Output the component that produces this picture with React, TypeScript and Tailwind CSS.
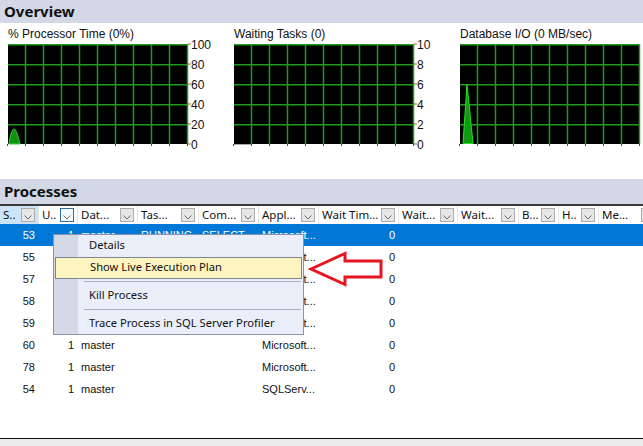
import React from 'react';

type Col = { w: string; label: string; align: 'left' | 'right' };

const cols: Col[] = [
  { w: 'w-[39px]', label: 'S..', align: 'right' },
  { w: 'w-[39px]', label: 'U..', align: 'right' },
  { w: 'w-[60px]', label: 'Dat...', align: 'left' },
  { w: 'w-[61px]', label: 'Tas...', align: 'left' },
  { w: 'w-[60px]', label: 'Com...', align: 'left' },
  { w: 'w-[60px]', label: 'Appl...', align: 'left' },
  { w: 'w-[80px]', label: 'Wait Tim...', align: 'right' },
  { w: 'w-[59px]', label: 'Wait...', align: 'left' },
  { w: 'w-[61px]', label: 'Wait...', align: 'left' },
  { w: 'w-[40px]', label: 'B...', align: 'left' },
  { w: 'w-[40px]', label: 'H..', align: 'left' },
  { w: 'w-[60px]', label: 'Me...', align: 'left' },
];

// rows 55-59 sit under the context menu, so only what shows past it is filled in
const rows = [
  ['53', '1', 'master', 'RUNNING', 'SELECT', 'Microsoft...', '0'],
  ['55', '', '', '', '', 'Microsoft...', '0'],
  ['57', '', '', '', '', 'Microsoft...', '0'],
  ['58', '', '', '', '', 'Microsoft...', '0'],
  ['59', '', '', '', '', 'Microsoft...', '0'],
  ['60', '1', 'master', '', '', 'Microsoft...', '0'],
  ['78', '1', 'master', '', '', 'Microsoft...', '0'],
  ['54', '1', 'master', '', '', 'SQLServ...', '0'],
];

const charts = [
  { title: '% Processor Time (0%)', labels: ['100', '80', '60', '40', '20', '0'], peak: 'bell' },
  { title: 'Waiting Tasks (0)', labels: ['10', '8', '6', '4', '2', '0'], peak: 'none' },
  { title: 'Database I/O (0 MB/sec)', labels: [], peak: 'spike' },
];

const Chart: React.FC<{ labels: string[]; peak: string }> = ({ labels, peak }) => (
  <svg width="226" height="106" className="block overflow-visible">
    <rect x="0" y="0" width="180" height="100" fill="#000" />
    {[1, 2, 3, 4, 5, 6, 7, 8, 9, 10].map(i => (
      <line key={i} x1={i * 18 - 0.5} y1="0" x2={i * 18 - 0.5} y2="100" stroke="#1f9a1f" strokeWidth="1.5" />
    ))}
    {[0, 20, 40, 60, 80].map(y => (
      <line key={y} x1="0" y1={y + 0.75} x2="180" y2={y + 0.75} stroke="#1f9a1f" strokeWidth="1.5" />
    ))}
    {[0, 1, 2, 3, 4, 5, 6, 7, 8, 9, 10].map(i => (
      <line key={i} x1={i * 18 - 0.5} y1="100" x2={i * 18 - 0.5} y2="102" stroke="#444" strokeWidth="1" />
    ))}
    {peak === 'bell' && (
      <path d="M1,100 C2,92 4,85 6,85 C8,85 10,92 12,100 Z" fill="#0f930f" stroke="#39c939" strokeWidth="1" />
    )}
    {peak === 'spike' && <path d="M3,99.5 L7,40 L13,99.5 Z" fill="#0f9a0f" stroke="#22e022" strokeWidth="1" />}
    {peak === 'none' && <line x1="0" y1="100.5" x2="17" y2="100.5" stroke="#aaa" strokeWidth="1" />}
    {labels.map((l, i) => (
      <g key={l}>
        <line x1="180" y1={i * 20} x2="183" y2={i * 20} stroke="#b36a1e" strokeWidth="1" />
        <text x="183" y={i * 20 + 4.5} fontSize="12" fill="#111" fontFamily="'Liberation Sans', Arial, sans-serif">
          {l}
        </text>
      </g>
    ))}
  </svg>
);

const Chevron: React.FC = () => (
  <svg width="12" height="12" viewBox="0 0 12 12" className="block">
    <polyline points="2.5,6.5 6,10 9.5,6.5" fill="none" stroke="#6b6b6b" strokeWidth="1" />
  </svg>
);

export default function App() {
  return (
    <div className="relative w-[643px] h-[446px] overflow-hidden bg-white flex flex-col font-['Liberation_Sans',Arial,sans-serif] text-[#111]">
      <div className="h-[23px] bg-[#d2d8e5] flex items-center px-[4px] font-['Noto_Sans',sans-serif] font-bold text-[15px] text-[#111]">
        Overview
      </div>
      <div className="flex pl-[8px] h-[156px]">
        {charts.map(c => (
          <div key={c.title} className="w-[226px] shrink-0 flex flex-col">
            <div className="h-[21px] flex items-end pb-[1px] text-[12px] whitespace-nowrap">{c.title}</div>
            <Chart labels={c.labels} peak={c.peak} />
          </div>
        ))}
      </div>
      <div className="h-[25px] bg-[#d2d8e5] flex items-center px-[4px] font-['Noto_Sans',sans-serif] font-bold text-[15px]">
        Processes
      </div>
      <div className="h-[2px] bg-[#3a3a3a]" />
      <div className="h-[18px] flex whitespace-nowrap font-['Noto_Sans',sans-serif] text-[11.5px]">
        {cols.map((c, i) => (
          <div
            key={i}
            className={`${c.w} shrink-0 flex items-center justify-between pl-[3px] pr-[3px] border-r border-[#e4e4e4] ${
              i === 0 ? 'bg-[#cce4f7]' : ''
            }`}
          >
            <span>{c.label}</span>
            <span
              className={`w-[14px] h-[14px] flex items-center justify-center border ${
                i === 1 ? 'border-[#2f6fa8] bg-[#f3f8fd]' : 'border-[#adadad] bg-[#e6e6e6]'
              }`}
            >
              <Chevron />
            </span>
          </div>
        ))}
      </div>
      <div className="flex-1 text-[11px]">
        {rows.map((r, ri) => (
          <div key={ri} className={`h-[22px] flex items-center whitespace-nowrap ${ri === 0 ? 'bg-[#0078d7] text-white' : ''}`}>
            {r.map((v, ci) => (
              <div
                key={ci}
                className={`${cols[ci].w} shrink-0 overflow-hidden ${
                  cols[ci].align === 'right' ? 'text-right pr-[4px]' : 'text-left pl-[3px]'
                }`}
              >
                {v}
              </div>
            ))}
          </div>
        ))}
      </div>
      <div className="h-[1px] bg-[#111]" />
      <div className="h-[7px] bg-[#ececec]" />

      {/* context menu */}
      <div className="absolute left-[53px] top-[234px] w-[251px] h-[101px] border border-[#8795aa] bg-[#e9eef9] flex font-['Noto_Sans',sans-serif] text-[11.2px] text-[#111]">
        <div className="w-[24px] shrink-0 bg-[#d3d9e5]" />
        <div className="flex-1 flex flex-col">
          <div className="h-[22px] flex items-center pl-[11px]">Details</div>
          <div className="h-[22px] flex items-center pl-[11px] -ml-[23px] mr-[1px] border border-[#7b8799] bg-[#fdf4bf]">
            <span className="pl-[23px]">Show Live Execution Plan</span>
          </div>
          <div className="h-[6px] flex items-center pl-[6px] pr-[2px]">
            <div className="h-[1px] w-full bg-[#a9b2c2]" />
          </div>
          <div className="h-[22px] flex items-center pl-[11px]">Kill Process</div>
          <div className="h-[6px] flex items-center pl-[6px] pr-[2px]">
            <div className="h-[1px] w-full bg-[#a9b2c2]" />
          </div>
          <div className="h-[22px] flex items-center pl-[11px]">Trace Process in SQL Server Profiler</div>
        </div>
      </div>

      {/* red arrow */}
      <svg className="absolute left-[306px] top-[249px]" width="82" height="40">
        <polygon points="5,20 39,4.5 39,12 75,12 75,28 39,28 39,35.5" fill="#fff" stroke="#e6151f" strokeWidth="3" strokeLinejoin="miter" />
      </svg>
    </div>
  );
}
